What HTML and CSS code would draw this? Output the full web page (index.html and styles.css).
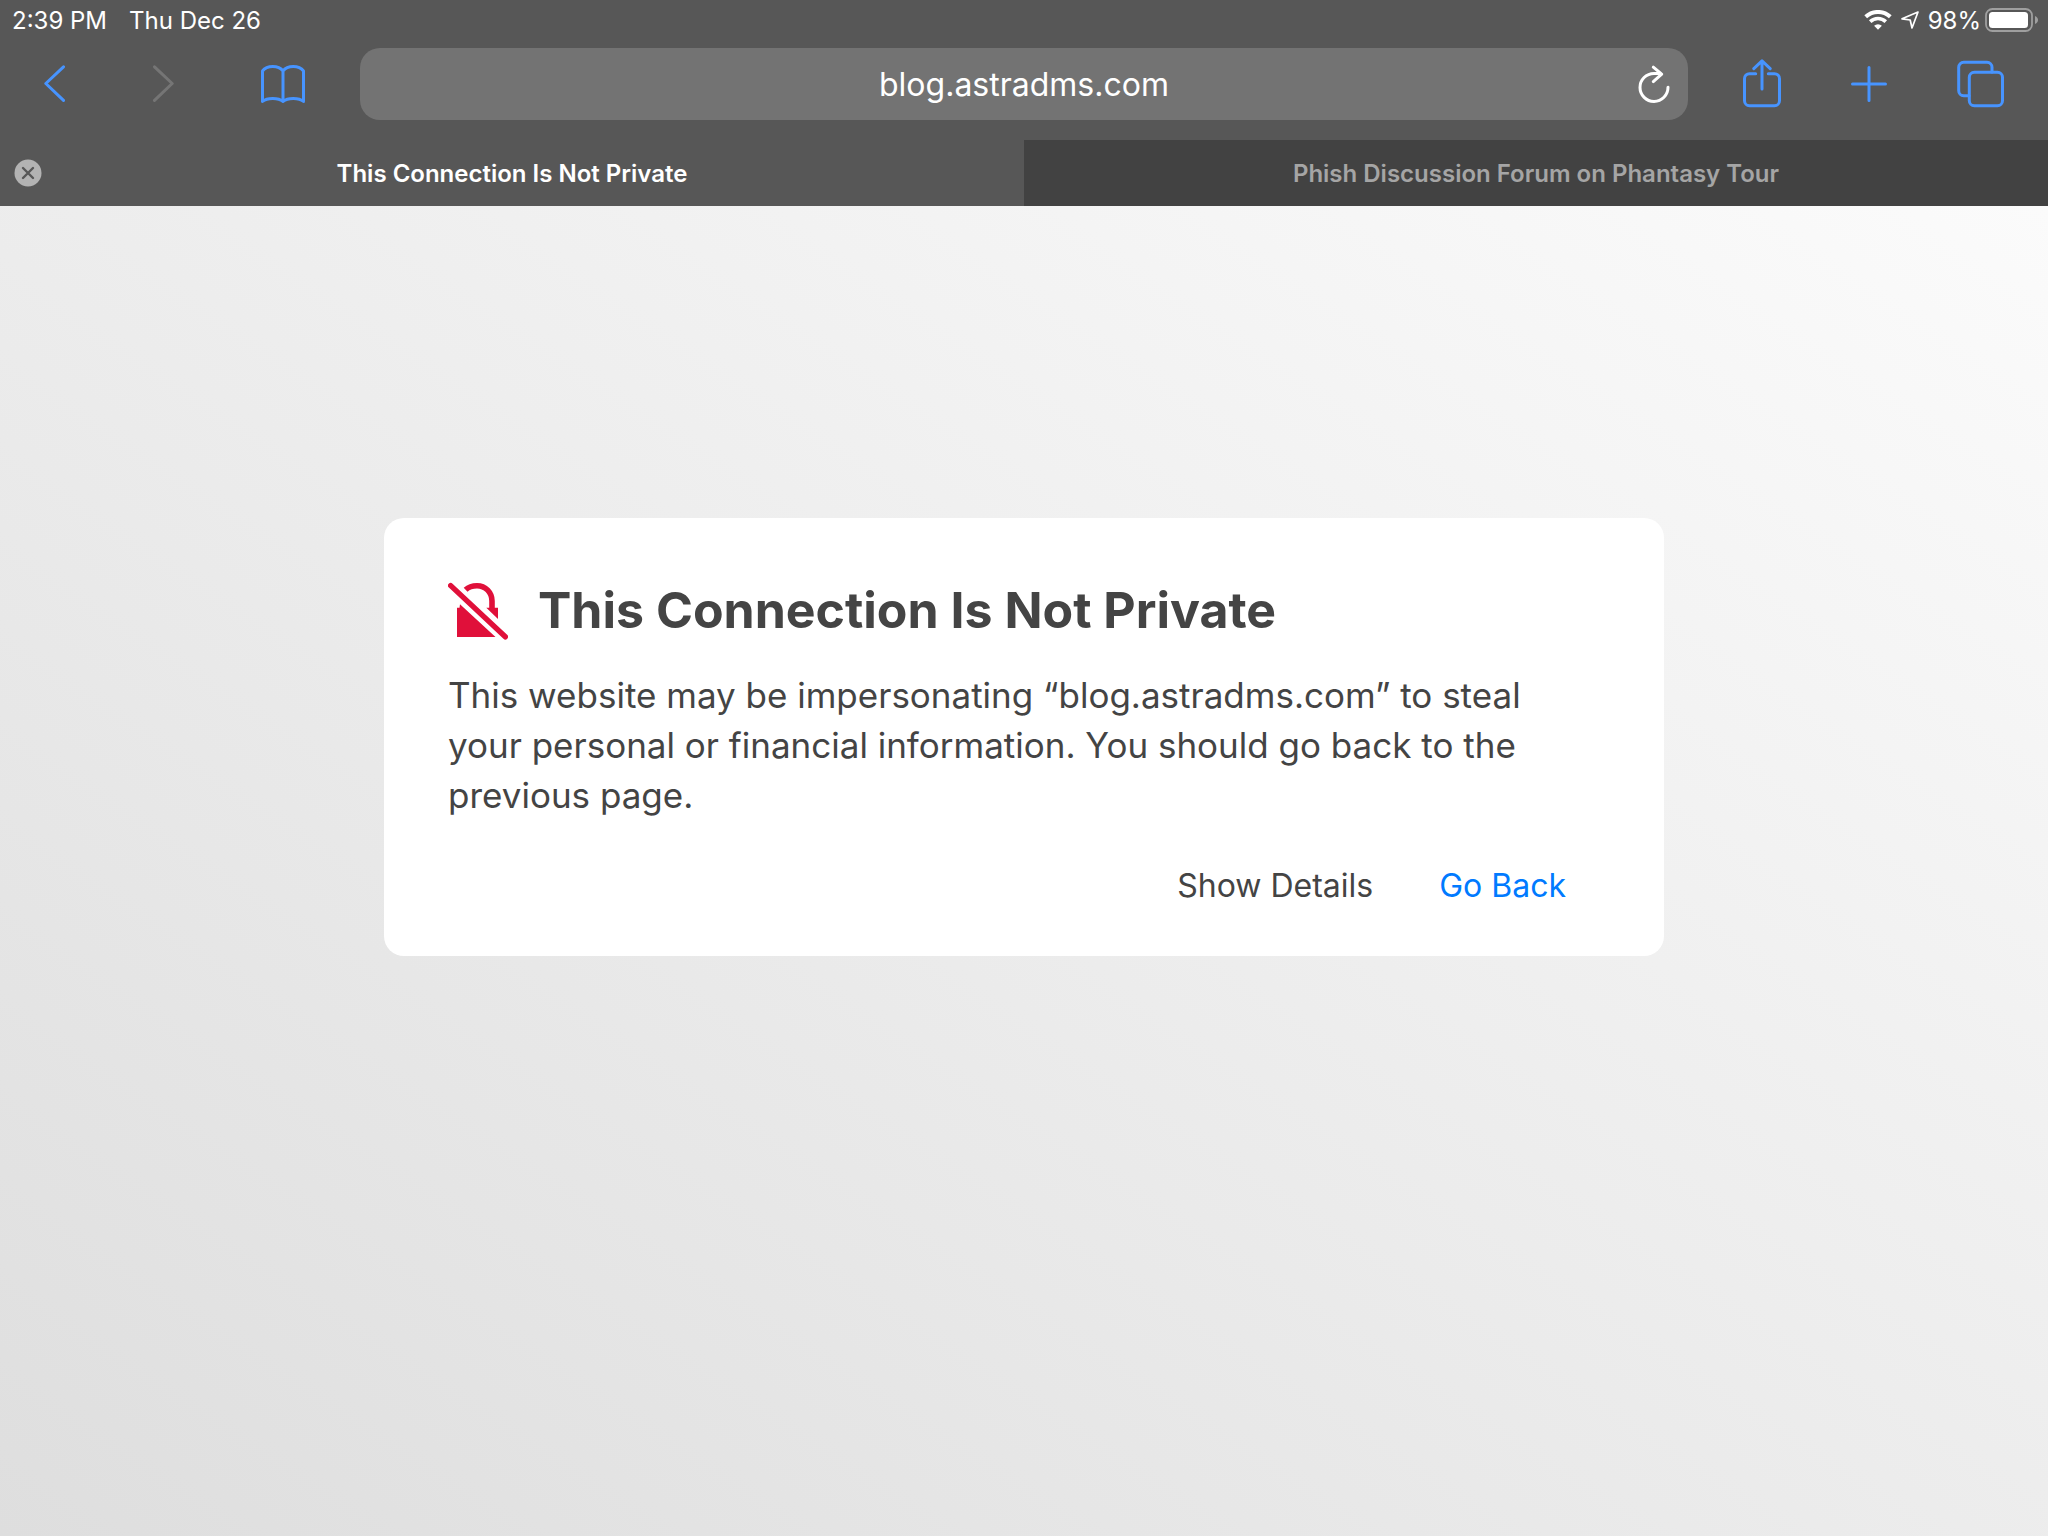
FILE: index.html
```html
<!DOCTYPE html>
<html lang="en">
<head>
  <meta charset="UTF-8">
  <meta name="viewport" content="width=device-width, initial-scale=1.0">
  <title>This Connection Is Not Private</title>
  <link rel="stylesheet" href="styles.css">
</head>
<body>

  <header class="browser">
    <div class="status-bar">
      <div class="status-left">
        <span>2:39 PM</span>
        <span>Thu Dec 26</span>
      </div>
      <div class="status-right">
        <svg width="28" height="20" viewBox="0 0 28 20" fill="none" stroke="#fff">
          <path d="M1.7 6.8A18 18 0 0 1 26.3 6.8" stroke-width="4"/>
          <path d="M6.2 11.6A11.5 11.5 0 0 1 21.8 11.6" stroke-width="3.6"/>
          <path d="M10.1 15.8A5.5 5.5 0 0 1 17.9 15.8L14 19.8Z" fill="#fff" stroke="none"/>
        </svg>
        <svg width="20" height="20" viewBox="0 0 20 20" fill="none" stroke="#fff" stroke-width="1.7" stroke-linejoin="round">
          <path d="M18 2L2 8.8L10.2 10L12 18Z"/>
        </svg>
        <div class="battery">
          <span>98%</span>
          <svg width="54" height="24" viewBox="0 0 54 24">
            <rect x="1" y="1" width="46" height="22" rx="6.5" fill="none" stroke="#9f9f9f" stroke-width="1.8"/>
            <rect x="4" y="4" width="39" height="16" rx="3.5" fill="#fff"/>
            <path d="M50 8C54 9.5 54 14.5 50 16Z" fill="#9f9f9f"/>
          </svg>
        </div>
      </div>
    </div>

    <div class="toolbar">
      <nav class="nav-group">
        <button class="icon-button" aria-label="Back">
          <svg width="22" height="38" viewBox="0 0 22 38"><path d="M19.5 1.8L1.8 18.5L19.5 35.4"/></svg>
        </button>
        <button class="icon-button" aria-label="Forward" disabled>
          <svg width="22" height="38" viewBox="0 0 22 38"><path d="M2.5 1.8L20.2 18.5L2.5 35.4"/></svg>
        </button>
        <button class="icon-button" aria-label="Bookmarks">
          <svg width="46" height="40" viewBox="0 0 46 40">
            <path d="M2.5 37.5V7C7 1 18.5 1 23 7C27.5 1 39 1 43.5 7V37.5C39 33.4 27.5 33.4 23 37.5C18.5 33.4 7 33.4 2.5 37.5ZM23 7V37.5"/>
          </svg>
        </button>
      </nav>

      <form class="address">
        <input class="address-input" type="text" aria-label="Address" value="blog.astradms.com">
        <button class="reload" type="button" aria-label="Reload">
          <svg width="32" height="38" viewBox="0 0 32 38"><path d="M30 22.3A14 14 0 1 1 16 8.4H23M15.3 2.2L23.7 9.2L15.3 16.6"/></svg>
        </button>
      </form>

      <div class="action-group">
        <button class="icon-button" aria-label="Share">
          <svg width="40" height="50" viewBox="0 0 40 50">
            <path d="M13.7 14.7H7.5A5 5 0 0 0 2.5 19.7V41.7A5 5 0 0 0 7.5 46.7H32.5A5 5 0 0 0 37.5 41.7V19.7A5 5 0 0 0 32.5 14.7H26.3M20 30V2.2M11.8 9.6L20 1.8L28.2 9.6"/>
          </svg>
        </button>
        <button class="icon-button" aria-label="New tab">
          <svg width="36" height="36" viewBox="0 0 36 36"><path d="M18 1.5V34.5M1.5 18H34.5"/></svg>
        </button>
        <button class="icon-button" aria-label="Show tabs">
          <svg width="48" height="48" viewBox="-2 0 48 48">
            <rect x="11.3" y="12.3" width="33.2" height="33.4" rx="5"/>
            <path d="M34 12V7.3A5 5 0 0 0 29 2.3H5.7A5 5 0 0 0 0.7 7.3V30.7A5 5 0 0 0 5.7 35.7H11"/>
          </svg>
        </button>
      </div>
    </div>

    <div class="tabs">
      <div class="tab active">
        <button class="tab-close" aria-label="Close tab">
          <svg width="28" height="28" viewBox="0 0 28 28">
            <circle cx="14" cy="14" r="13.5" fill="#b3b3b3"/>
            <path d="M9 9L19 19M19 9L9 19" stroke="#575757" stroke-width="2.4" stroke-linecap="round"/>
          </svg>
        </button>
        <a class="tab-title" href="#">This Connection Is Not Private</a>
      </div>
      <div class="tab">
        <a class="tab-title" href="#">Phish Discussion Forum on Phantasy Tour</a>
      </div>
    </div>
  </header>

  <main class="page">
    <section class="card">
      <div class="card-title">
        <svg width="60" height="60" viewBox="0 -2 60 60" fill="#e0103a">
          <path d="M9 25.7H11.5L12 22.3L47.5 55H9Z"/>
          <path d="M38.3 25.7H50V37Z"/>
          <path d="M17.6 7.7C20.5 5 25 3.7 29 3.7C37.5 3.7 44 10.5 44 19V28" fill="none" stroke="#e0103a" stroke-width="5.6"/>
          <path d="M2.7 3.6L57.3 54.8" stroke="#e0103a" stroke-width="5.4" stroke-linecap="round"/>
        </svg>
        <h1>This Connection Is Not Private</h1>
      </div>
      <p class="card-text">This website may be impersonating “blog.astradms.com” to steal your personal or financial information. You should go back to the previous page.</p>
      <div class="card-actions">
        <button class="text-button">Show Details</button>
        <button class="text-button primary">Go Back</button>
      </div>
    </section>
  </main>

</body>
</html>
```
FILE: styles.css
```css
* {
  box-sizing: border-box;
}

body {
  margin: 0;
  min-height: 100vh;
  display: flex;
  flex-direction: column;
  font-family: Inter, "Liberation Sans", sans-serif;
}

button {
  padding: 0;
  border: none;
  background: none;
  font-family: inherit;
  cursor: pointer;
}

svg {
  display: block;
}

.browser {
  background-color: #575757;
  color: #fff;
}

/* Status bar */
.status-bar {
  display: flex;
  justify-content: space-between;
  height: 40px;
  padding: 0 9px 0 12px;
  font-size: 24px;
}

.status-left,
.status-right,
.battery {
  display: flex;
  align-items: center;
}

.status-left {
  gap: 22px;
}

.status-right {
  gap: 8px;
}

.battery {
  gap: 4px;
}

/* Toolbar */
.toolbar {
  display: flex;
  align-items: center;
  gap: 54px;
  padding: 8px 44px 20px;
}

.nav-group,
.action-group {
  display: flex;
  align-items: center;
}

.nav-group {
  gap: 86px;
}

.action-group {
  gap: 69px;
}

.icon-button svg,
.reload svg {
  fill: none;
  stroke: #4794ff;
  stroke-width: 3;
  stroke-linecap: round;
  stroke-linejoin: round;
}

.icon-button:disabled svg {
  stroke: #757575;
}

.address {
  position: relative;
  flex: 1;
}

.address-input {
  display: block;
  width: 100%;
  height: 72px;
  padding: 0 60px;
  border: none;
  border-radius: 20px;
  background-color: #737373;
  color: #fff;
  font-family: inherit;
  font-size: 32px;
  text-align: center;
}

.reload {
  position: absolute;
  top: 17px;
  right: 18px;
}

.reload svg {
  stroke: #fff;
}

/* Tabs */
.tabs {
  display: flex;
}

.tab {
  position: relative;
  flex: 1;
  height: 66px;
  display: flex;
  align-items: center;
  justify-content: center;
  background-color: #424242;
  color: #a5a5a5;
}

.tab.active {
  background-color: #575757;
  color: #fff;
}

.tab-title {
  color: inherit;
  font-size: 24px;
  font-weight: 600;
  text-decoration: none;
}

.tab-close {
  position: absolute;
  top: 19px;
  left: 14px;
}

/* Warning page */
.page {
  flex: 1;
  padding: 312px 20px 20px;
  background: linear-gradient(to top right, #dedede, #fbfbfb);
}

.card {
  max-width: 1280px;
  margin: 0 auto;
  padding: 62px 64px 46px;
  border-radius: 20px;
  background-color: #fff;
  color: #444;
}

.card-title {
  display: flex;
  align-items: center;
  gap: 30px;
  margin-bottom: 30px;
}

.card-title h1 {
  margin: 0;
  font-size: 50px;
  line-height: 60px;
}

.card-text {
  margin: 0 0 42px;
  font-size: 35px;
  line-height: 50px;
}

.card-actions {
  display: flex;
  justify-content: flex-end;
  gap: 66px;
  padding-right: 34px;
}

.text-button {
  color: #444;
  font-size: 32px;
  line-height: 48px;
}

.text-button.primary {
  color: #007aff;
}
```
